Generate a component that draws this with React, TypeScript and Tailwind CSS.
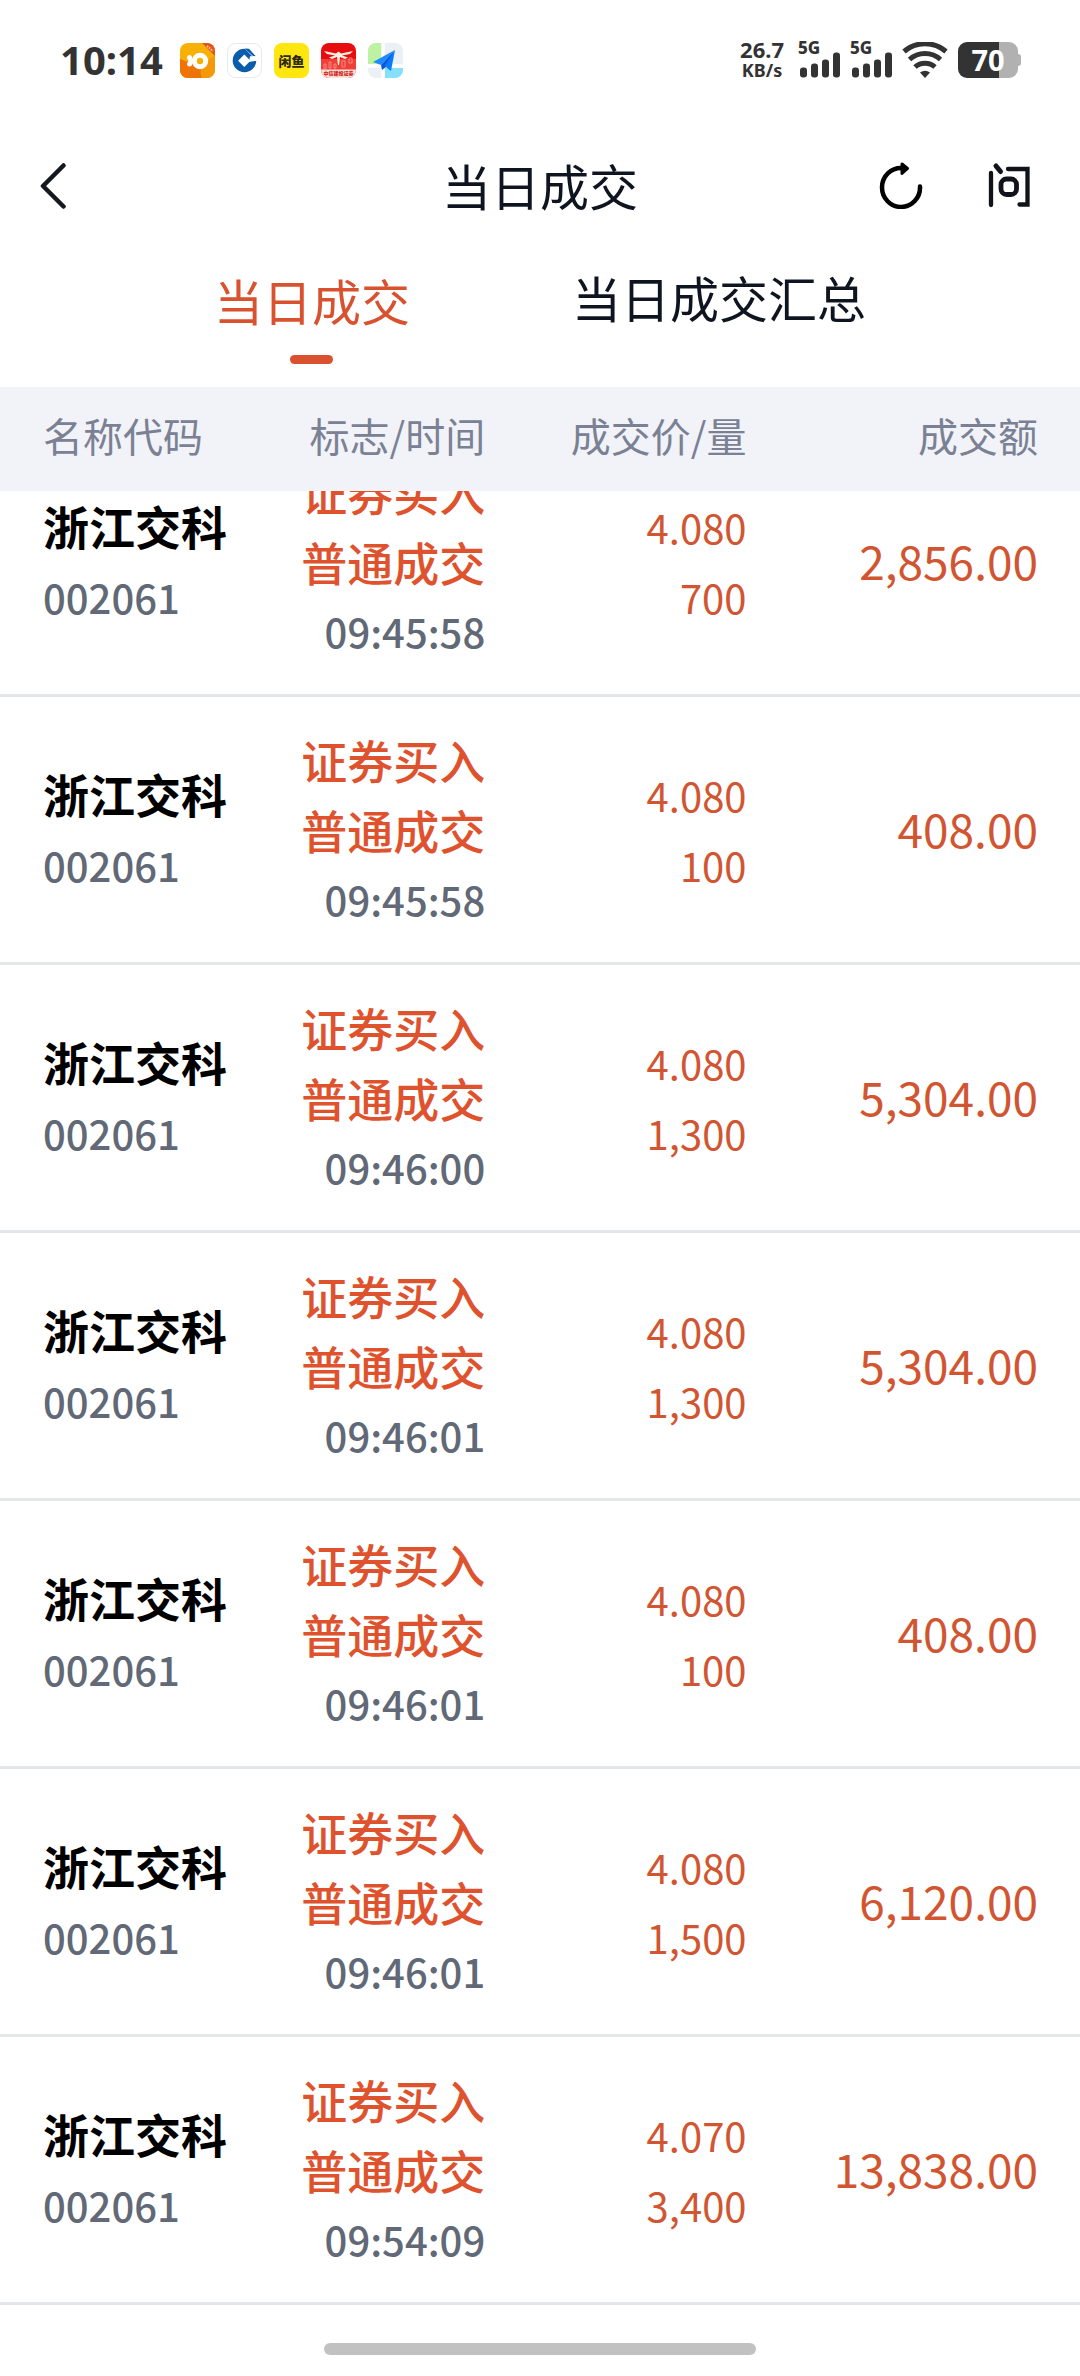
import type { ReactNode } from "react";

type Trade = {
  name: string;
  code: string;
  side: string;
  kind: string;
  time: string;
  price: string;
  volume: string;
  amount: string;
};

const stock = { name: "浙江交科", code: "002061", side: "证券买入", kind: "普通成交" };

const trades: Trade[] = [
  { ...stock, time: "09:45:58", price: "4.080", volume: "700", amount: "2,856.00" },
  { ...stock, time: "09:45:58", price: "4.080", volume: "100", amount: "408.00" },
  { ...stock, time: "09:46:00", price: "4.080", volume: "1,300", amount: "5,304.00" },
  { ...stock, time: "09:46:01", price: "4.080", volume: "1,300", amount: "5,304.00" },
  { ...stock, time: "09:46:01", price: "4.080", volume: "100", amount: "408.00" },
  { ...stock, time: "09:46:01", price: "4.080", volume: "1,500", amount: "6,120.00" },
  { ...stock, time: "09:54:09", price: "4.070", volume: "3,400", amount: "13,838.00" },
];

function CoinAppIcon() {
  return (
    <svg viewBox="0 0 35 35" className="size-[35px]">
      <defs>
        <clipPath id="coin-clip">
          <rect width="35" height="35" rx="8" />
        </clipPath>
      </defs>
      <g clipPath="url(#coin-clip)">
        <rect width="35" height="35" fill="#f9b005" />
        <path d="M0 17 C8 20 14 25 22 22 L35 12 V35 H0Z" fill="#f29a0c" />
        <path d="M0 16 C8 18 16 24 23 22 C20 27 20 31 22 35 H0Z" fill="#ee7408" />
        <path d="M22 0 H35 V13Z" fill="#e2541c" />
        <path d="M27 3 L33 8" stroke="#f8c9a8" strokeWidth="2" strokeDasharray="1.5 1" />
      </g>
      <circle cx="20" cy="18" r="5.700" fill="none" stroke="#fff" strokeWidth="5" />
      <circle cx="9.500" cy="14.500" r="2.500" fill="#fff" />
      <circle cx="9.500" cy="21" r="2.500" fill="#fff" />
      <path d="M9 15 L14 18 L9 21Z" fill="#fff" stroke="#fff" strokeWidth="1.500" />
    </svg>
  );
}

function BankAppIcon() {
  return (
    <svg viewBox="0 0 35 35" className="size-[35px]">
      <rect x="0.500" y="0.500" width="34" height="34" rx="8" fill="#fff" stroke="#e9e9ec" />
      <circle cx="17.500" cy="17.500" r="11.800" fill="#0b5cab" />
      <path d="M16 4 L31 19 L31 3Z" fill="#fff" />
      <path d="M17.500 5.500 L22 5.700 L29 13.500 L26 13Z" fill="#0b5cab" />
      <path d="M16.500 7 L24.500 13.200 H20Z" fill="#0b5cab" />
      <path d="M23 13.200 L31 13.200 L31 17.500 L22 19Z" fill="#fff" />
      <path d="M17.300 11.500 L23.500 17.700 L17.300 23.900 L11.100 17.700Z" fill="#fff" />
    </svg>
  );
}

function FishAppIcon() {
  return (
    <svg viewBox="0 0 35 35" className="size-[35px]">
      <rect width="35" height="35" rx="8" fill="#ffe60f" />
      <text x="17.500" y="22.500" textAnchor="middle" fontSize="13" fontWeight="900" fill="#2c2a18">
        闲鱼
      </text>
    </svg>
  );
}

function BrokerAppIcon() {
  return (
    <svg viewBox="0 0 35 35" className="size-[35px]">
      <defs>
        <clipPath id="broker-clip">
          <rect width="35" height="35" rx="8" />
        </clipPath>
      </defs>
      <g clipPath="url(#broker-clip)">
        <rect width="35" height="35" fill="#e60c10" />
        <rect y="16" width="35" height="11" fill="#ee4038" />
        <rect y="26.500" width="35" height="9" fill="#fbe3da" />
        <path
          d="M3 21h2v5h-2z M8 19h2v6h-2z M13 21h2v4h-2z M21 18h3v6h-3z M28 15h3v5h-3z"
          fill="none"
          stroke="#f79a92"
          strokeWidth="0.800"
        />
      </g>
      <path
        d="M3 8 L15 10.500 L17.500 8.500 L20 10.500 L32 8 L29 11 L21 12.500 L27 14.500 L24 16 L19 14 L18 22 H17 L16 14 L11 16 L8 14.500 L14 12.500 L6 11Z"
        fill="#fff0df"
      />
      <text x="17.500" y="32" textAnchor="middle" fontSize="5" fontWeight="900" fill="#d41818">
        中信建投证券
      </text>
    </svg>
  );
}

function MapAppIcon() {
  return (
    <svg viewBox="0 0 35 35" className="size-[35px]">
      <defs>
        <clipPath id="map-clip">
          <rect width="35" height="35" rx="8" />
        </clipPath>
      </defs>
      <g clipPath="url(#map-clip)">
        <rect width="35" height="35" fill="#eaf0f3" />
        <path d="M0 0h14v21h-14z" fill="#bdf2a2" />
        <path d="M17 25h18v10h-18z" fill="#86e0fc" />
        <path d="M15 0 V35 M0 23 H35" stroke="#fff" strokeWidth="3.500" />
      </g>
      <path d="M27 7 L5 19 L13 22Z" fill="#1d8bff" />
      <path d="M27 7 L13 22 L14 27 L18 24Z" fill="#0a55d8" />
      <path d="M27 7 L16.500 23 L23 28Z" fill="#0a7bf8" />
    </svg>
  );
}

function Signal() {
  return (
    <div className="flex h-9 w-[42px] flex-col">
      <span className="h-3 text-[17px] leading-3 font-extrabold">5G</span>
      <svg viewBox="0 0 42 25" className="-mt-0.5 h-[26px] w-[42px]" fill="#333">
        <rect x="2" y="15" width="7" height="10" rx="3" />
        <rect x="13" y="11" width="7" height="14" rx="3" />
        <rect x="24" y="7" width="7" height="18" rx="3" />
        <rect x="35" y="0" width="7" height="25" rx="3" />
      </svg>
    </div>
  );
}

function Wifi() {
  return (
    <svg viewBox="0 0 46 36" className="h-9 w-[46px]" fill="none" stroke="#333" strokeWidth="5">
      <path d="M2 9.500 A32 32 0 0 1 44 9.500" />
      <path d="M7.500 17.500 A23 23 0 0 1 38.500 17.500" />
      <path d="M13 25 A15 15 0 0 1 33 25" />
      <path d="M18 30.500 Q23 27 28 30.500 L23 36Z" fill="#333" stroke="none" />
    </svg>
  );
}

function Battery() {
  return (
    <div className="flex items-center">
      <div className="flex h-9 w-[60px] items-center justify-center rounded-[9px] bg-[linear-gradient(to_right,#333_68%,#b1b1b1_68%)] text-[29px] font-bold text-white">
        70
      </div>
      <div className="h-3 w-[3px] rounded-r-sm bg-[#b1b1b1]" />
    </div>
  );
}

function StatusBar() {
  return (
    <div className="flex h-[120px] items-center justify-between pr-[59px] pl-[60px] font-['Noto_Sans','Noto_Sans_CJK_SC',sans-serif] text-[#333]">
      <div className="flex items-center gap-3">
        <span className="mr-[5px] text-[40px] leading-none font-bold">10:14</span>
        <CoinAppIcon />
        <BankAppIcon />
        <FishAppIcon />
        <BrokerAppIcon />
        <MapAppIcon />
      </div>
      <div className="flex items-center gap-[10px]">
        <div className="mr-1 flex flex-col items-center font-bold">
          <span className="text-[22px] leading-[21px]">26.7</span>
          <span className="text-[18px] leading-[21px]">KB/s</span>
        </div>
        <Signal />
        <Signal />
        <Wifi />
        <Battery />
      </div>
    </div>
  );
}

function NavBar() {
  return (
    <header className="grid h-[130px] grid-cols-[1fr_auto_1fr] items-center px-[38px]">
      <button type="button" aria-label="返回" className="w-fit">
        <svg
          viewBox="0 0 30 48"
          className="h-12 w-[30px]"
          fill="none"
          stroke="#14181f"
          strokeWidth="4.500"
          strokeLinecap="round"
          strokeLinejoin="round"
        >
          <path d="M25.500 4.500 L5 25 L25.500 45.500" />
        </svg>
      </button>
      <h1 className="text-[49px] leading-[70px]">当日成交</h1>
      <div className="flex items-center justify-end gap-[62px] pr-[11px]">
        <button type="button" aria-label="刷新">
          <svg viewBox="0 0 48 48" className="size-12" fill="none" stroke="#000" strokeWidth="4.500" strokeLinecap="round">
            <path d="M43 25.500 A19 19.500 0 1 1 25 7" />
            <path d="M25 3 L30.500 7.500 L25 12.500Z" fill="#000" strokeWidth="3" strokeLinejoin="round" />
          </svg>
        </button>
        <button type="button" aria-label="问">
          <svg viewBox="0 0 44 48" className="h-12 w-11" fill="none" stroke="#101319" strokeWidth="4.300" strokeLinecap="round">
            <path d="M4 12 V44" />
            <path d="M9 5 L13.500 10.500" strokeWidth="5" />
            <path d="M21 8 H40.500 V43.500 H32.500" />
            <rect x="14" y="18" width="15.500" height="15.500" rx="5.500" strokeWidth="4.800" />
          </svg>
        </button>
      </div>
    </header>
  );
}

function Tabs() {
  return (
    <nav
      role="tablist"
      className="flex h-[137px] items-start justify-center gap-[162px] pt-3 text-[49px] leading-[70px]"
    >
      <button type="button" role="tab" aria-selected="true" className="flex flex-col items-center pt-[3px] text-[#d9522f]">
        当日成交
        <span className="mt-5 h-[9px] w-[43px] rounded-full bg-[#d9512f]" />
      </button>
      <button type="button" role="tab" aria-selected="false">
        当日成交汇总
      </button>
    </nav>
  );
}

function Row({ children, className }: { children: ReactNode; className: string }) {
  return (
    <tr className={`grid grid-cols-[22fr_22fr_26fr_29fr] items-center pr-[42px] pl-[43px] ${className}`}>
      {children}
    </tr>
  );
}

function TradeRow({ trade }: { trade: Trade }) {
  return (
    <Row className="h-[268px] border-b-[3px] border-[#e4e7ea] pb-[3px]">
      <td className="pt-0.5 leading-[72px]">
        <div className="text-[46px] font-bold text-black">{trade.name}</div>
        <div className="text-[40px] font-medium text-[#616876]">{trade.code}</div>
      </td>
      <td className="pt-px text-right leading-[70px]">
        <div className="text-[46px] font-medium text-[#de532e]">{trade.side}</div>
        <div className="text-[46px] font-medium text-[#de532e]">{trade.kind}</div>
        <div className="text-[40px] font-medium text-[#616876]">{trade.time}</div>
      </td>
      <td className="pt-1 text-right text-[40px] leading-[70px] text-[#d25532]">
        <div>{trade.price}</div>
        <div>{trade.volume}</div>
      </td>
      <td className="text-right text-[46px] leading-[70px] text-[#d25532]">{trade.amount}</td>
    </Row>
  );
}

export default function App() {
  return (
    <div className="min-h-screen bg-white font-['Noto_Sans_CJK_SC',sans-serif] text-[#0f1520]">
      <StatusBar />
      <NavBar />
      <Tabs />
      <table className="block w-full overflow-hidden">
        <thead className="relative z-10 block bg-[#f2f3f8]">
          <Row className="h-[104px] pb-2 text-[40px] text-[#7b8194]">
            <th className="text-left font-normal">名称代码</th>
            <th className="text-right font-normal">标志/时间</th>
            <th className="text-right font-normal">成交价/量</th>
            <th className="text-right font-normal">成交额</th>
          </Row>
        </thead>
        {/* list is scrolled part of a row under the header */}
        <tbody className="-mt-[62px] block">
          {trades.map((trade, index) => (
            <TradeRow key={index} trade={trade} />
          ))}
        </tbody>
      </table>
      <div className="flex justify-center pt-[38px] pb-[21px]">
        <div className="h-3 w-2/5 rounded-full bg-[#c1c1c1]" />
      </div>
    </div>
  );
}
